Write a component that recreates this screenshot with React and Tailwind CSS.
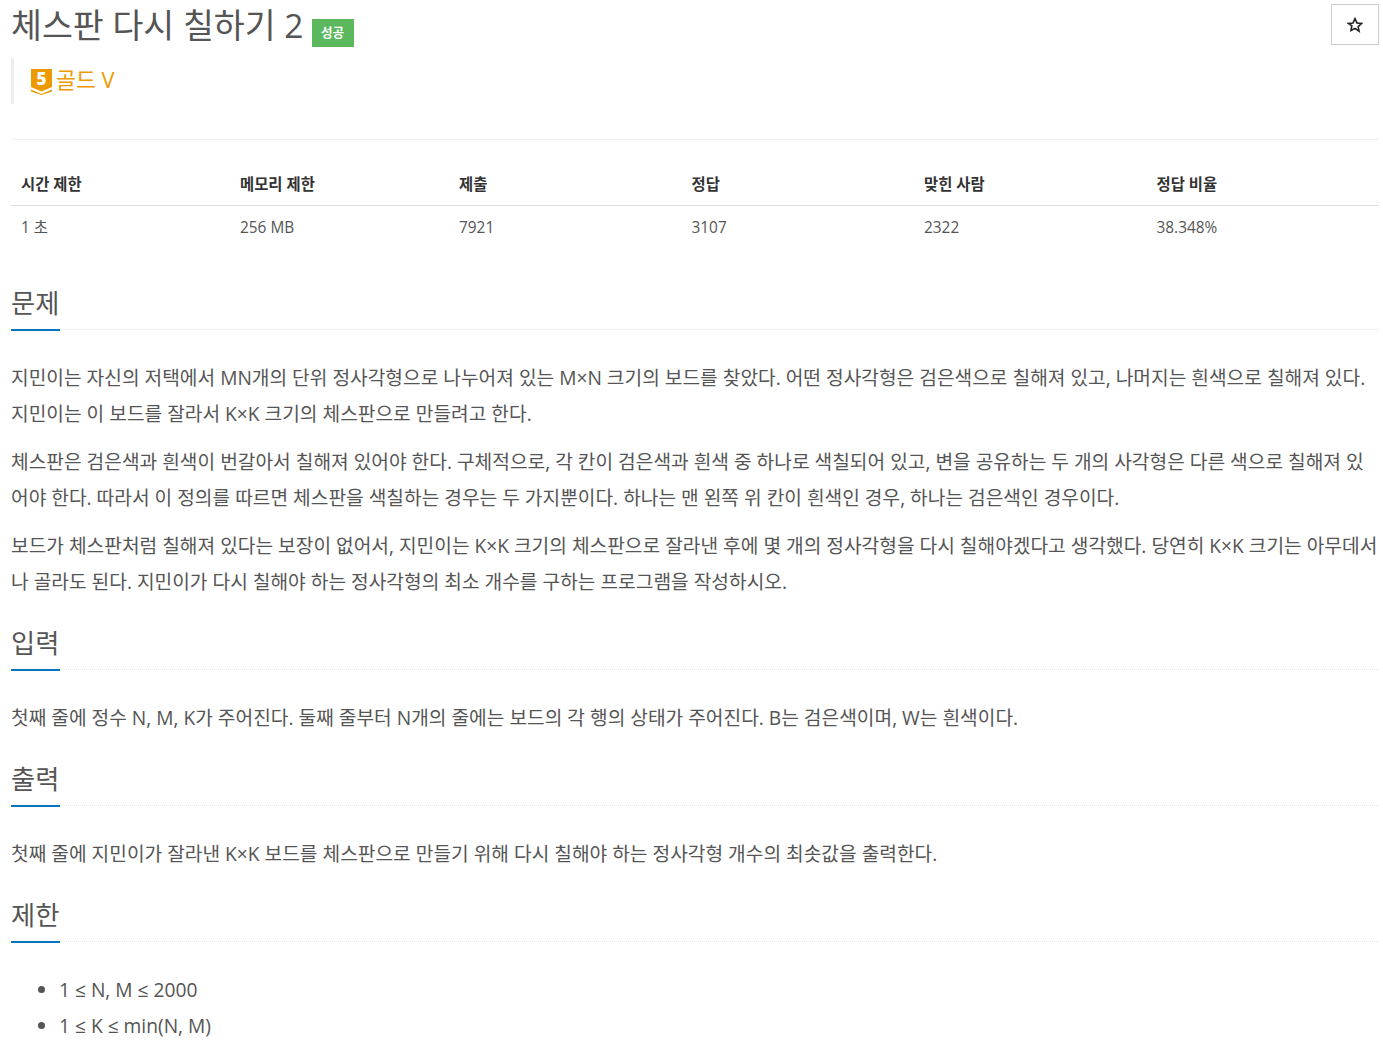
const FONT = "font-['Open_Sans','Noto_Sans_CJK_KR',sans-serif]";

const stats = [
  { label: "시간 제한", value: "1 초", width: "w-[219px]" },
  { label: "메모리 제한", value: "256 MB", width: "w-[219px]" },
  { label: "제출", value: "7921", width: "w-[232.5px]" },
  { label: "정답", value: "3107", width: "w-[232.5px]" },
  { label: "맞힌 사람", value: "2322", width: "w-[232.5px]" },
  { label: "정답 비율", value: "38.348%", width: "w-[232.5px]" },
];

const SectionTitle = ({ children }) => (
  <div className="border-b border-dotted border-[#e5e5e5] h-[48px] flex">
    <h2 className="border-b-2 border-[#0076c0] w-[49px] h-[49px] text-[26.25px] leading-[38px] pt-[2px] text-[#555] whitespace-nowrap">
      {children}
    </h2>
  </div>
);

const TierBadge = () => (
  <svg width="21" height="26" viewBox="0 0 21 26" className="shrink-0 overflow-visible">
    <path d="M0 0H21V18L10.5 22.5L0 18Z" fill="#ec9a00" />
    <path d="M0 20.5L10.5 25L21 20.5V22.5L10.5 26L0 22.5Z" fill="#ec9a00" />
    <text x="10.5" y="15.5" textAnchor="middle" fontSize="17" fontWeight="800" fill="#fff" fontFamily="'Open Sans', sans-serif">
      5
    </text>
  </svg>
);

export default function App() {
  return (
    <div className={`${FONT} bg-white text-[#555] pl-[11px] pr-[4px] w-[1383px] h-[1041px] overflow-hidden relative`}>
      {/* Header */}
      <div className="flex items-start h-[46px]">
        <h1 className="text-[33.6px] leading-[50px] text-[#555] whitespace-nowrap">체스판 다시 칠하기 2</h1>
        <span className="ml-[8px] mt-[19px] bg-[#5cb85c] text-white text-[12.6px] font-semibold leading-[28px] w-[42px] h-[28px] text-center">
          성공
        </span>
        <button className="ml-auto mt-[4px] w-[48px] h-[41px] border border-[#ccc] flex items-center justify-center text-[#333] bg-white">
          <svg width="16" height="16" viewBox="0 0 24 24" fill="none" stroke="#222" strokeWidth="2.4">
            <path d="M12 2.5l2.9 6.4 6.9.8-5.1 4.7 1.4 6.9L12 17l-6.1 3.3 1.4-6.9L2.2 9.7l6.9-.8z" />
          </svg>
        </button>
      </div>

      {/* Tier */}
      <div className="mt-[12px] h-[46px] border-l-[3px] border-[#eee] pl-[17px] flex items-start pt-[11px]">
        <TierBadge />
        <span className="ml-[4px] text-[21.7px] leading-[22px] text-[#ec9a00] whitespace-nowrap">골드 V</span>
      </div>

      <div className="mt-[35px] border-t border-[#eee]" />

      {/* Stats */}
      <table className="mt-[24px] w-[1368px] table-fixed text-[15.4px] text-[#555]">
        <thead>
          <tr className="border-b border-[#ddd]">
            {stats.map((s) => (
              <th key={s.label} className={`${s.width} px-[10px] h-[41px] text-left font-bold text-[#333]`}>
                {s.label}
              </th>
            ))}
          </tr>
        </thead>
        <tbody>
          <tr>
            {stats.map((s) => (
              <td key={s.label} className="px-[10px] pt-[2px] h-[43px] text-left">
                {s.value}
              </td>
            ))}
          </tr>
        </tbody>
      </table>

      {/* 문제 */}
      <div className="mt-[34px]">
        <SectionTitle>문제</SectionTitle>
      </div>
      <div className="mt-[30px] text-[19.21px] leading-[36px]">
        <p className="mb-[12px]">
          지민이는 자신의 저택에서 MN개의 단위 정사각형으로 나누어져 있는 M×N 크기의 보드를 찾았다. 어떤 정사각형은 검은색으로 칠해져 있고, 나머지는 흰색으로 칠해져 있다. 지민이는 이 보드를 잘라서 K×K 크기의 체스판으로 만들려고 한다.
        </p>
        <p className="mb-[12px]">
          체스판은 검은색과 흰색이 번갈아서 칠해져 있어야 한다. 구체적으로, 각 칸이 검은색과 흰색 중 하나로 색칠되어 있고, 변을 공유하는 두 개의 사각형은 다른 색으로 칠해져 있어야 한다. 따라서 이 정의를 따르면 체스판을 색칠하는 경우는 두 가지뿐이다. 하나는 맨 왼쪽 위 칸이 흰색인 경우, 하나는 검은색인 경우이다.
        </p>
        <p>
          보드가 체스판처럼 칠해져 있다는 보장이 없어서, 지민이는 K×K 크기의 체스판으로 잘라낸 후에 몇 개의 정사각형을 다시 칠해야겠다고 생각했다. 당연히 K×K 크기는 아무데서나 골라도 된다. 지민이가 다시 칠해야 하는 정사각형의 최소 개수를 구하는 프로그램을 작성하시오.
        </p>
      </div>

      {/* 입력 */}
      <div className="mt-[22px]">
        <SectionTitle>입력</SectionTitle>
      </div>
      <p className="mt-[30px] text-[19.21px] leading-[36px]">
        첫째 줄에 정수 N, M, K가 주어진다. 둘째 줄부터 N개의 줄에는 보드의 각 행의 상태가 주어진다. B는 검은색이며, W는 흰색이다.
      </p>

      {/* 출력 */}
      <div className="mt-[22px]">
        <SectionTitle>출력</SectionTitle>
      </div>
      <p className="mt-[30px] text-[19.21px] leading-[36px]">
        첫째 줄에 지민이가 잘라낸 K×K 보드를 체스판으로 만들기 위해 다시 칠해야 하는 정사각형 개수의 최솟값을 출력한다.
      </p>

      {/* 제한 */}
      <div className="mt-[22px]">
        <SectionTitle>제한</SectionTitle>
      </div>
      <ul className="mt-[30px] pl-[48px] list-disc text-[19.21px] leading-[36px]">
        <li>1 ≤ N, M ≤ 2000</li>
        <li>1 ≤ K ≤ min(N, M)</li>
      </ul>
    </div>
  );
}
